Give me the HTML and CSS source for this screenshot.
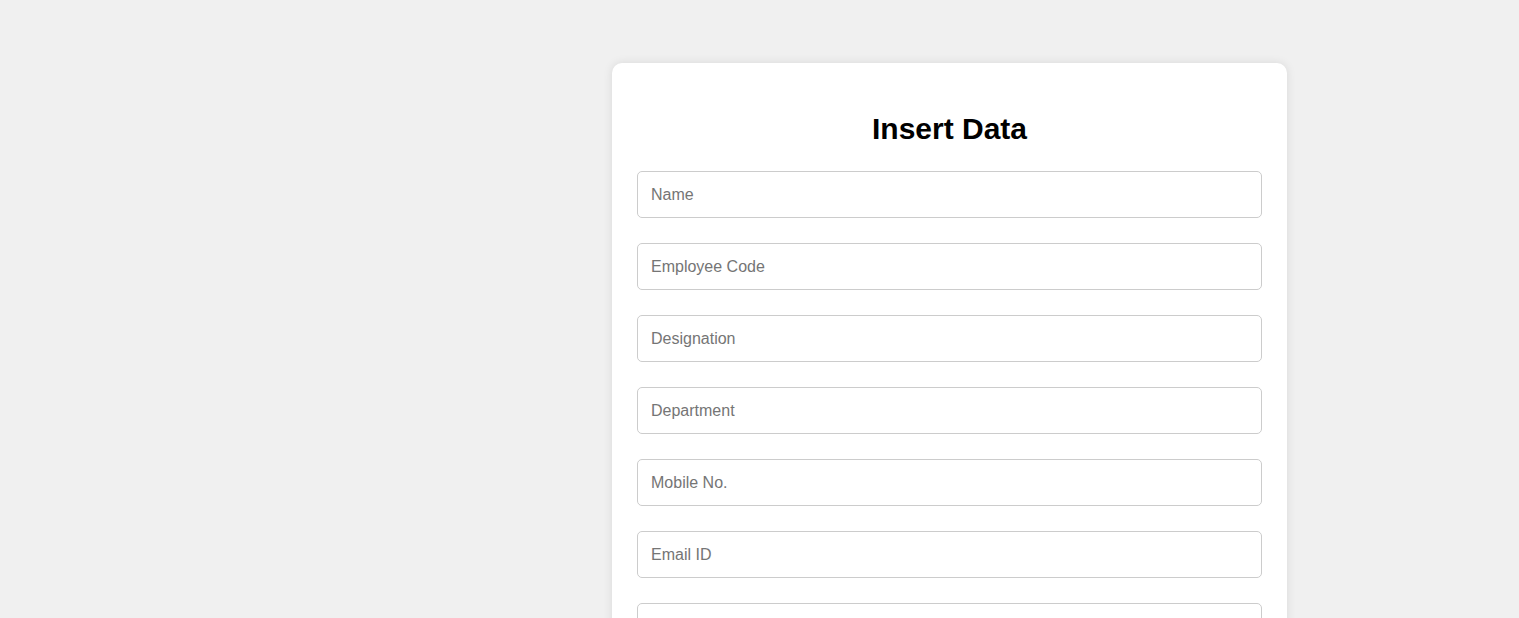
FILE: index.html
```html
<!DOCTYPE html>
<html lang="en">
<head>
<meta charset="utf-8">
<title>Insert Data</title>
<link rel="stylesheet" href="styles.css">
</head>
<body>
<div class="page">
  <form class="card">
    <h2 class="title">Insert Data</h2>
    <input class="field" type="text" placeholder="Name">
    <input class="field" type="text" placeholder="Employee Code">
    <input class="field" type="text" placeholder="Designation">
    <input class="field" type="text" placeholder="Department">
    <input class="field" type="text" placeholder="Mobile No.">
    <input class="field" type="text" placeholder="Email ID">
    <input class="field" type="text" aria-label="Address">
  </form>
</div>
</body>
</html>
```

FILE: styles.css
```css
html, body {
  margin: 0;
  padding: 0;
  background: #f0f0f0;
  font-family: "Liberation Sans", Arial, sans-serif;
}
.page {
  display: flex;
  padding: 63px 0 40px 612px;
}
.card {
  width: 675px;
  box-sizing: border-box;
  background: #ffffff;
  border-radius: 10px;
  box-shadow: 0 0 10px rgba(0, 0, 0, 0.1);
  padding: 25px;
  display: flex;
  flex-direction: column;
}
.title {
  margin: 24px 0 25px;
  font-size: 30px;
  line-height: 34px;
  font-weight: bold;
  text-align: center;
  color: #000;
}
.field {
  display: block;
  width: 100%;
  height: 47px;
  box-sizing: border-box;
  margin: 0 0 25px;
  padding: 0 13px;
  border: 1px solid #cccccc;
  border-radius: 5px;
  font-family: "Liberation Sans", Arial, sans-serif;
  font-size: 16px;
  color: #333;
  background: #fff;
}
.field::placeholder {
  color: #757575;
}
```
